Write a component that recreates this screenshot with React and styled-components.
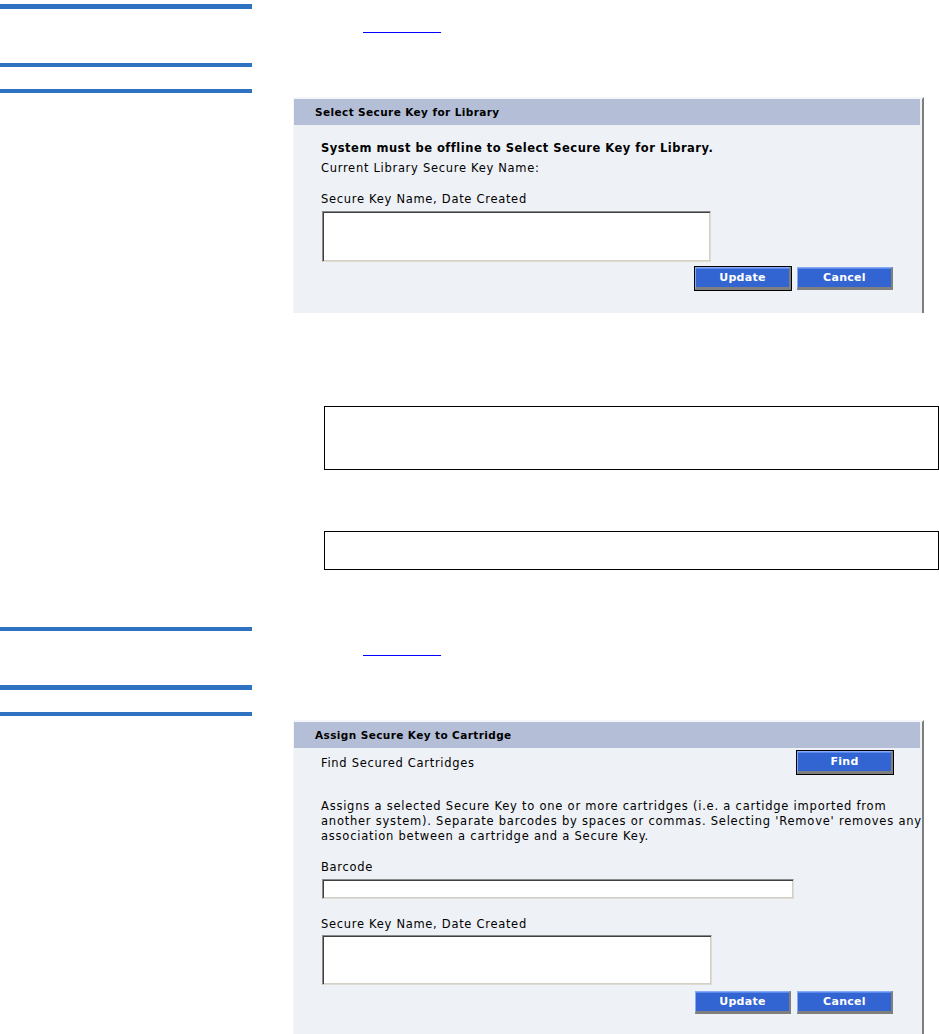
import React from "react";
import styled, { createGlobalStyle } from "styled-components";

const GlobalStyle = createGlobalStyle`
  html, body { margin: 0; padding: 0; background: #ffffff; }
  body { font-family: "DejaVu Sans", Verdana, sans-serif; color: #000; }
  * { box-sizing: border-box; }
`;

const Page = styled.div`
  width: 939px;
  display: flex;
  flex-direction: column;
`;

const SectionHead = styled.div`
  display: grid;
  grid-template-columns: 252px 1fr;
  padding-top: 4px;
  margin-top: ${(p) => p.$mt || 0}px;
`;

const RuleColumn = styled.div`
  display: flex;
  flex-direction: column;
`;

const Rule = styled.div`
  height: ${(p) => p.$h}px;
  margin-top: ${(p) => p.$gap || 0}px;
  background: #2f72c1;
`;

const LinkCell = styled.div`
  padding: 28px 0 0 111px;
`;

const RefLink = styled.a`
  display: block;
  width: 78px;
  height: 0;
  border-bottom: 1px solid #0000ff;
`;

const Panel = styled.section`
  margin: 4px 0 0 293px;
  width: 631px;
  background: #eef1f6;
  border-top: 2px solid #f5f6f9;
  border-left: 1px solid #f5f6f9;
  border-right: 2px solid #7e7e7e;
  padding-right: 2px;
`;

const PanelHeader = styled.h2`
  margin: 0;
  height: 26px;
  line-height: 26px;
  background: #b4bed7;
  padding-left: 21px;
  font-size: 10.5px;
  font-weight: bold;
  letter-spacing: 0.4px;
  color: #000;
`;

const PanelBody = styled.div`
  display: flex;
  flex-direction: column;
  padding: ${(p) => p.$top}px 27px ${(p) => p.$bottom}px 27px;
  font-size: 11.5px;
`;

const Line = styled.div`
  line-height: 20px;
  margin-top: ${(p) => p.$mt || 0}px;
  font-weight: ${(p) => (p.$bold ? "bold" : "normal")};
  letter-spacing: ${(p) => (p.$bold ? "0.5px" : "0.7px")};
  white-space: nowrap;
`;

const Paragraph = styled.p`
  margin: ${(p) => p.$mt}px 0 0 0;
  line-height: 15px;
  letter-spacing: 0.77px;
  white-space: nowrap;
`;

const TextArea = styled.textarea`
  display: block;
  margin: ${(p) => p.$mt}px 0 0 1px;
  width: ${(p) => p.$w}px;
  height: ${(p) => p.$h}px;
  resize: none;
  background: #ffffff;
  border: 1px solid;
  border-color: #8a8a8a #dedbd3 #dedbd3 #8a8a8a;
  box-shadow: inset 1px 1px 0 #404040, inset -1px -1px 0 #d4d0c8;
  padding: 2px;
  outline: none;
`;

const TextInput = styled.input`
  display: block;
  margin: ${(p) => p.$mt}px 0 0 1px;
  width: ${(p) => p.$w}px;
  height: 20px;
  background: #ffffff;
  border: 1px solid;
  border-color: #8a8a8a #dedbd3 #dedbd3 #8a8a8a;
  box-shadow: inset 1px 1px 0 #404040, inset -1px -1px 0 #d4d0c8;
  padding: 2px;
  outline: none;
`;

const ButtonRow = styled.div`
  display: flex;
  justify-content: flex-end;
  gap: 6px;
  margin-top: ${(p) => p.$mt}px;
`;

const ActionRow = styled.div`
  display: flex;
  align-items: center;
  justify-content: space-between;
  margin-top: 3px;
  height: 23px;
  line-height: 20px;
  letter-spacing: 0.7px;
`;

const Button = styled.button`
  width: 96px;
  height: 23px;
  padding: 0;
  background: #3264d2;
  color: #ffffff;
  font-family: "DejaVu Sans", Verdana, sans-serif;
  font-size: 11px;
  font-weight: bold;
  letter-spacing: 0.3px;
  border-style: solid;
  border-width: 1px 2px 3px 1px;
  border-color: #86aaf6 #7f7f7f #7f7f7f #86aaf6;
  box-shadow: inset 0 1px 0 #5c8aea;
  outline: ${(p) => (p.$focus ? "1px solid #000" : "none")};
  cursor: pointer;
`;

const NoteBox = styled.div`
  margin: ${(p) => p.$mt}px 0 0 324px;
  width: 615px;
  height: ${(p) => p.$h}px;
  border: 1px solid #000;
`;

export default function App() {
  return (
    <Page>
      <GlobalStyle />
      <SectionHead>
        <RuleColumn>
          <Rule $h={5} />
          <Rule $h={4} $gap={54} />
          <Rule $h={4} $gap={22} />
        </RuleColumn>
        <LinkCell>
          <RefLink href="#" aria-label="figure reference" />
        </LinkCell>
      </SectionHead>

      <Panel>
        <PanelHeader>Select Secure Key for Library</PanelHeader>
        <PanelBody $top={13} $bottom={23}>
          <Line $bold>System must be offline to Select Secure Key for Library.</Line>
          <Line>Current Library Secure Key Name:</Line>
          <Line $mt={11}>Secure Key Name, Date Created</Line>
          <TextArea $mt={2} $w={389} $h={51} />
          <ButtonRow $mt={5}>
            <Button $focus>Update</Button>
            <Button>Cancel</Button>
          </ButtonRow>
        </PanelBody>
      </Panel>

      <NoteBox $mt={93} $h={64} />
      <NoteBox $mt={61} $h={39} />

      <SectionHead $mt={53}>
        <RuleColumn>
          <Rule $h={4} />
          <Rule $h={5} $gap={54} />
          <Rule $h={4} $gap={22} />
        </RuleColumn>
        <LinkCell>
          <RefLink href="#" aria-label="figure reference" />
        </LinkCell>
      </SectionHead>

      <Panel>
        <PanelHeader>Assign Secure Key to Cartridge</PanelHeader>
        <PanelBody $top={0} $bottom={21}>
          <ActionRow>
            <span>Find Secured Cartridges</span>
            <Button $focus>Find</Button>
          </ActionRow>
          <Paragraph $mt={25}>
            Assigns a selected Secure Key to one or more cartridges (i.e. a cartidge imported from
            <br />
            another system). Separate barcodes by spaces or commas. Selecting 'Remove' removes any
            <br />
            association between a cartridge and a Secure Key.
          </Paragraph>
          <Line $mt={13}>Barcode</Line>
          <TextInput $mt={2} $w={472} />
          <Line $mt={15}>Secure Key Name, Date Created</Line>
          <TextArea $mt={1} $w={390} $h={50} />
          <ButtonRow $mt={6}>
            <Button>Update</Button>
            <Button>Cancel</Button>
          </ButtonRow>
        </PanelBody>
      </Panel>
    </Page>
  );
}
